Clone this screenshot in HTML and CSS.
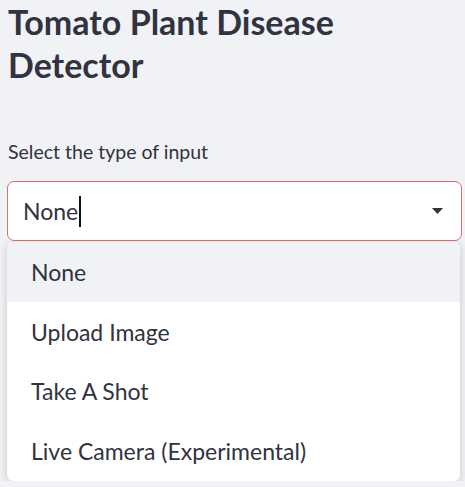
FILE: index.html
```html
<!DOCTYPE html>
<html lang="en">
<head>
<meta charset="utf-8">
<title>Tomato Plant Disease Detector</title>
<link rel="stylesheet" href="styles.css">
</head>
<body>
<main class="app">
  <h1 class="title">Tomato Plant Disease Detector</h1>
  <label class="label">Select the type of input</label>
  <div class="select-wrap">
    <div class="select">
      <span class="value">None</span><span class="caret"></span>
      <svg class="arrow" width="11" height="6" viewBox="0 0 11 6"><path d="M0 0 H11 L5.5 6 Z" fill="#31333f"/></svg>
    </div>
    <ul class="menu">
      <li class="item active">None</li>
      <li class="item">Upload Image</li>
      <li class="item">Take A Shot</li>
      <li class="item">Live Camera (Experimental)</li>
    </ul>
  </div>
</main>
</body>
</html>
```
FILE: styles.css
```css
html, body {
  margin: 0;
  padding: 0;
  background: #f0f2f6;
}
body {
  font-family: Lato, "Noto Sans", sans-serif;
  color: #31333f;
}
.app {
  padding: 0 3px 0 7px;
}
.title {
  margin: 0 0 54px 0;
  max-width: 400px;
  font-size: 34px;
  line-height: 43px;
  font-weight: 700;
  padding-left: 1px;
}
.label {
  display: block;
  font-size: 19.5px;
  line-height: 24px;
  margin: 0 0 17px 1px;
}
.select-wrap {
  display: flex;
  flex-direction: column;
  gap: 1px;
}
.select {
  box-sizing: border-box;
  height: 60px;
  border: 1px solid #d9706e;
  border-radius: 7px;
  background: #fff;
  display: flex;
  align-items: center;
  padding: 0 18px 0 15px;
  font-size: 23px;
}
.value {
  line-height: 26px;
}
.caret {
  display: inline-block;
  width: 2px;
  height: 31px;
  background: #111;
  margin-left: 1px;
}
.arrow {
  margin-left: auto;
}
.menu {
  margin: 0 2px 0 0;
  padding: 0;
  list-style: none;
  background: #fff;
  border-radius: 6px;
  overflow: hidden;
  box-shadow: 0 2px 8px rgba(0, 0, 0, 0.18);
}
.item {
  height: 59.75px;
  display: flex;
  align-items: center;
  padding-left: 24px;
  font-size: 23px;
}
.item.active {
  background: #f0f2f6;
}
```
